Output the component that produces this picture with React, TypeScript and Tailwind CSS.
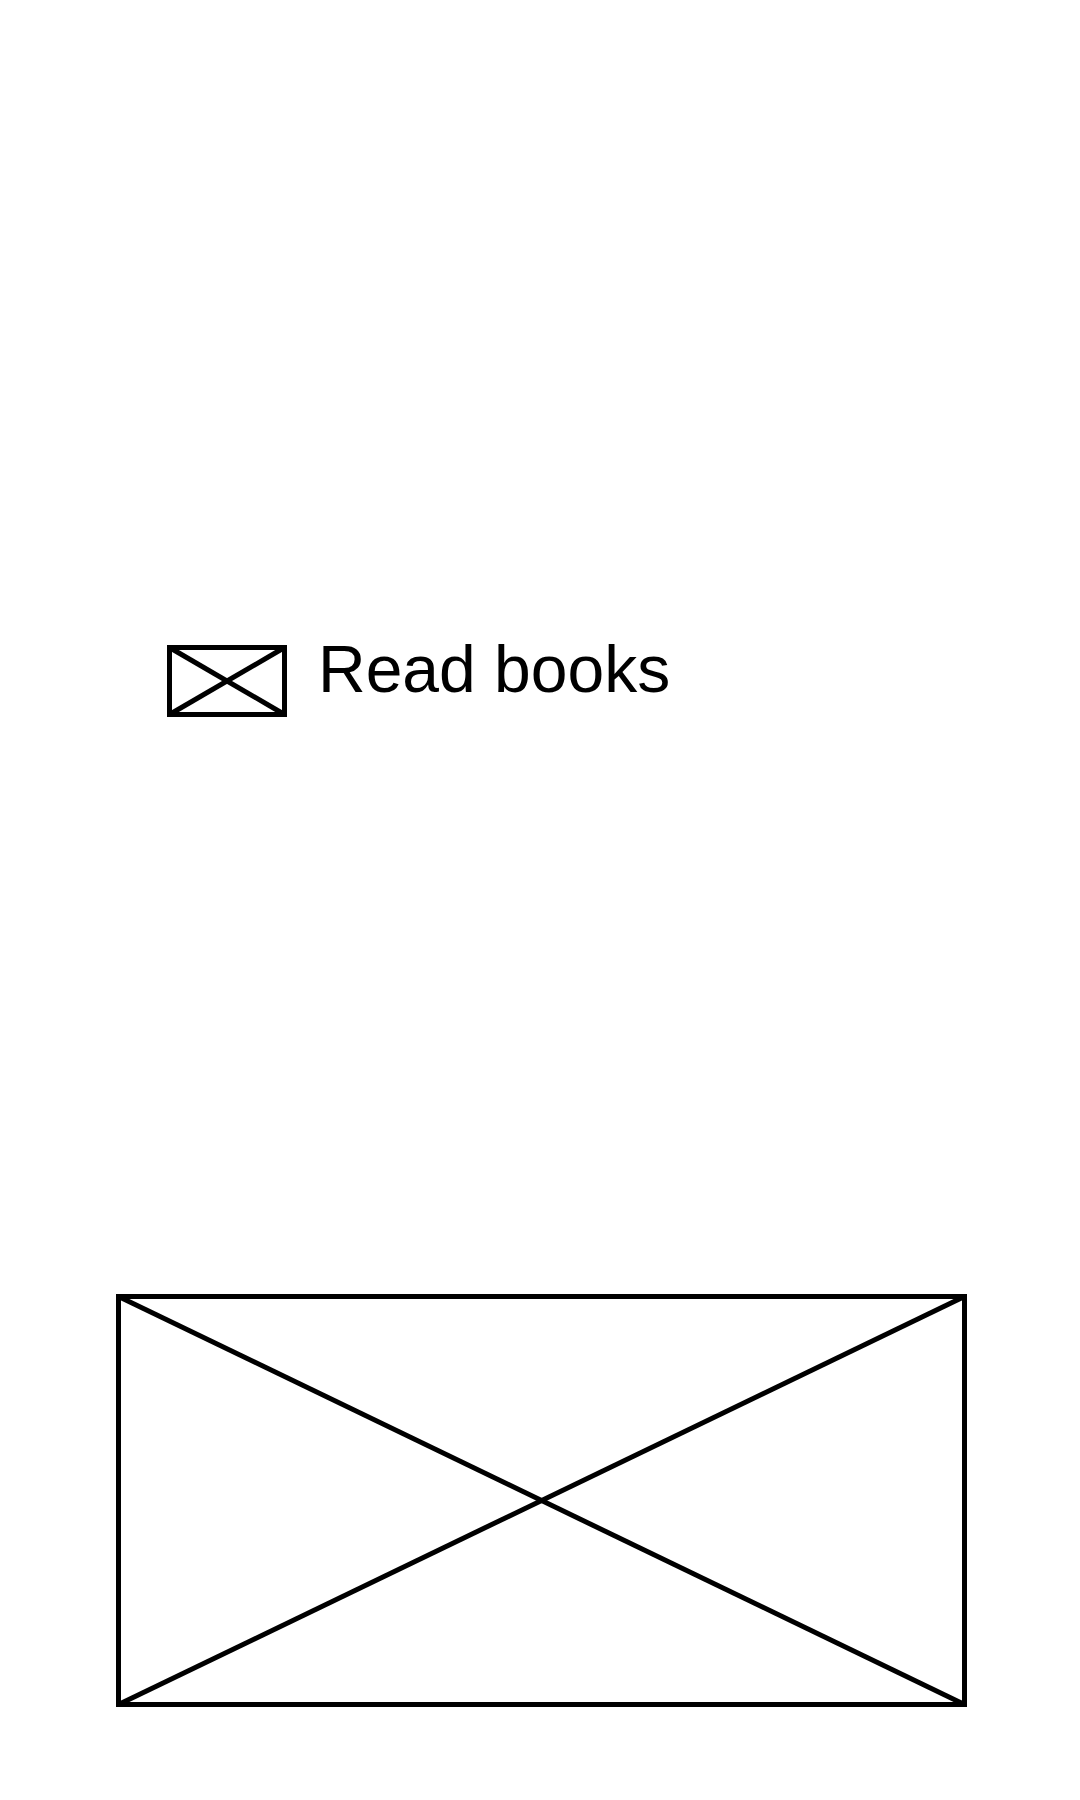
import React from 'react';

function Placeholder({ w, h, stroke }: { w: number; h: number; stroke: number }) {
  const s = stroke / 2;
  return (
    <svg width={w} height={h} viewBox={`0 0 ${w} ${h}`} className="block shrink-0">
      <rect x={s} y={s} width={w - stroke} height={h - stroke} fill="none" stroke="#000" strokeWidth={stroke} />
      <line x1={s} y1={s} x2={w - s} y2={h - s} stroke="#000" strokeWidth={stroke} />
      <line x1={w - s} y1={s} x2={s} y2={h - s} stroke="#000" strokeWidth={stroke} />
    </svg>
  );
}

export default function App() {
  return (
    <div className="w-[1080px] h-[1800px] bg-white overflow-hidden font-['Liberation_Sans',Arial,sans-serif]">
      <div className="pt-[636px] pl-[167px] flex items-start gap-[31px]">
        <div className="mt-[9px]">
          <Placeholder w={120} h={72} stroke={5} />
        </div>
        <span className="text-[66px] leading-[66px] text-black">Read books</span>
      </div>
      <div className="mt-[577px] ml-[116px]">
        <Placeholder w={851} h={413} stroke={5} />
      </div>
    </div>
  );
}
